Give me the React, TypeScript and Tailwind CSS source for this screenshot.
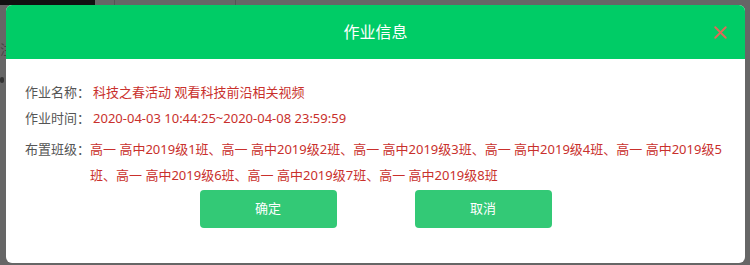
import { X } from "lucide-react";

const classes = [1, 2, 3, 4, 5, 6, 7, 8].map((n) => `高一 高中2019级${n}班`).join("、");

function Row({ label, value, className = "" }: { label: string; value: string; className?: string }) {
  return (
    <div className={`flex leading-[26px] ${className}`}>
      <span className="shrink-0 text-[#555]">{label}</span>
      <span className="text-[#c9302c]">{value}</span>
    </div>
  );
}

export default function App() {
  return (
    <div
      className="relative h-[265px] w-[750px] overflow-hidden bg-[#666]"
      style={{ fontFamily: '"Noto Sans", "Noto Sans CJK SC", sans-serif' }}
    >
      {/* page behind the overlay */}
      <div className="flex h-[5px]">
        <div className="w-[95px] bg-[#111]" />
        <div className="w-[20px] border-r border-[#555]" />
        <div className="w-[121px] border-r border-[#555]" />
      </div>
      <div className="mt-[36px] w-[6px] text-[13px] leading-4 text-[#444]">注</div>
      <div className="mt-[20px] h-[6px] w-[4px] rounded-full bg-[#333]" />

      {/* dialog */}
      <div className="absolute left-[6px] top-[5px] flex h-[258px] w-[739px] flex-col overflow-hidden rounded-[6px] bg-white">
        <div className="relative flex h-[54px] shrink-0 items-center justify-center bg-[#00cc66]">
          <span className="text-[16px] text-white">作业信息</span>
          <X className="absolute right-[14px] top-[17px] h-[21px] w-[21px] text-[#dd6a58]" strokeWidth={2.2} />
        </div>
        <div className="px-[19px] pt-[20px] text-[13px]">
          <Row label="作业名称：" value="科技之春活动 观看科技前沿相关视频" className="[&>span:first-child]:pr-[3px]" />
          <Row label="作业时间：" value="2020-04-03 10:44:25~2020-04-08 23:59:59" className="[&>span:first-child]:pr-[3px]" />
          <Row label="布置班级：" value={classes} className="mt-[5px]" />
          <div className="mt-[2px] flex justify-center gap-[78px]">
            <button className="h-[38px] w-[137px] rounded-[4px] bg-[#33c976] text-[13px] text-white">确定</button>
            <button className="h-[38px] w-[137px] rounded-[4px] bg-[#33c976] text-[13px] text-white">取消</button>
          </div>
        </div>
      </div>
    </div>
  );
}
